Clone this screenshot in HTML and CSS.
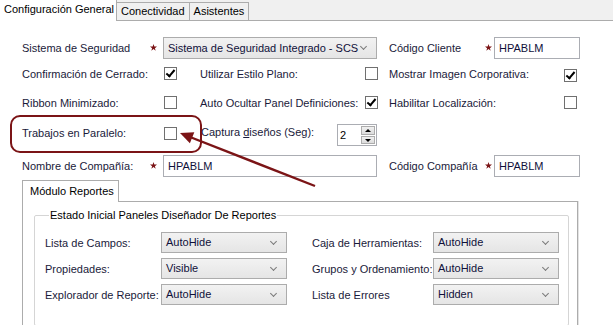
FILE: index.html
```html
<!DOCTYPE html>
<html lang="es">
<head>
    <meta charset="UTF-8">
    <title>Configuración General</title>
    <link rel="stylesheet" href="styles.css">
</head>
<body>
    <div id="window">
        <div class="tabs">
            <div class="tab active">Configuración General</div>
            <div class="tab">Conectividad</div>
            <div class="tab">Asistentes</div>
        </div>

        <div class="page">
            <div class="form-grid">
                <!-- fila 1 -->
                <span class="label col-a">Sistema de Seguridad</span>
                <span class="req col-b"><svg viewBox="0 0 10 10"><polygon points="5,0 6.2,3.6 10,3.6 7,5.9 8.1,9.5 5,7.3 1.9,9.5 3,5.9 0,3.6 3.8,3.6"/></svg></span>
                <div class="combo wide col-c">Sistema de Seguridad Integrado - SCS</div>
                <span class="label col-f">Código Cliente</span>
                <span class="req col-g"><svg viewBox="0 0 10 10"><polygon points="5,0 6.2,3.6 10,3.6 7,5.9 8.1,9.5 5,7.3 1.9,9.5 3,5.9 0,3.6 3.8,3.6"/></svg></span>
                <div class="textbox short col-h">HPABLM</div>

                <!-- fila 2 -->
                <span class="label col-a">Confirmación de Cerrado:</span>
                <span class="check on col-c"></span>
                <span class="label col-d">Utilizar Estilo Plano:</span>
                <span class="check col-e"></span>
                <span class="label col-f">Mostrar Imagen Corporativa:</span>
                <span class="check on low col-i"></span>

                <!-- fila 3 -->
                <span class="label col-a">Ribbon Minimizado:</span>
                <span class="check col-c"></span>
                <span class="label col-d">Auto Ocultar Panel Definiciones:</span>
                <span class="check on col-e"></span>
                <span class="label col-f">Habilitar Localización:</span>
                <span class="check col-i"></span>

                <!-- fila 4 -->
                <span class="label col-a">Trabajos en Paralelo:</span>
                <span class="check col-c"></span>
                <div class="spin-row">
                    <span class="label">Captura <u>d</u>iseños (Seg):</span>
                    <div class="spinner">
                        <span class="spin-value">2</span>
                        <span class="spin-btns"><i class="up"></i><i class="down"></i></span>
                    </div>
                </div>

                <!-- fila 5 -->
                <span class="label col-a bottom">Nombre de Compañía:</span>
                <span class="req col-b bottom"><svg viewBox="0 0 10 10"><polygon points="5,0 6.2,3.6 10,3.6 7,5.9 8.1,9.5 5,7.3 1.9,9.5 3,5.9 0,3.6 3.8,3.6"/></svg></span>
                <div class="textbox wide col-c bottom">HPABLM</div>
                <span class="label col-f bottom">Código Compañía</span>
                <span class="req col-g bottom"><svg viewBox="0 0 10 10"><polygon points="5,0 6.2,3.6 10,3.6 7,5.9 8.1,9.5 5,7.3 1.9,9.5 3,5.9 0,3.6 3.8,3.6"/></svg></span>
                <div class="textbox short col-h bottom">HPABLM</div>
            </div>

            <div class="subtabs">
                <div class="subtab">Módulo Reportes</div>
            </div>
            <div class="subpage">
                <fieldset class="group">
                    <legend>Estado Inicial Paneles Diseñador De Reportes</legend>
                    <div class="panel-grid">
                        <span class="label">Lista de Campos:</span>
                        <div class="combo small">AutoHide</div>
                        <span class="label right">Caja de Herramientas:</span>
                        <div class="combo small">AutoHide</div>

                        <span class="label">Propiedades:</span>
                        <div class="combo small">Visible</div>
                        <span class="label right">Grupos y Ordenamiento:</span>
                        <div class="combo small">AutoHide</div>

                        <span class="label">Explorador de Reporte:</span>
                        <div class="combo small">AutoHide</div>
                        <span class="label right">Lista de Errores</span>
                        <div class="combo small">Hidden</div>
                    </div>
                </fieldset>
            </div>
        </div>

        <!-- anotación -->
        <div class="callout"></div>
        <svg class="arrow" width="613" height="325" viewBox="0 0 613 325">
            <line x1="315" y1="186" x2="190" y2="137" stroke="#7b1416" stroke-width="2.4"/>
            <polygon points="180,133 194.3,132.2 189.9,143.3" fill="#7b1416"/>
        </svg>
    </div>
</body>
</html>
```

FILE: styles.css
```css
body {
    margin: 0;
    background: #ffffff;
    font-family: "Liberation Sans", Arial, sans-serif;
    font-size: 11px;
    color: #1a1a3a;
    overflow: hidden;
}

#window {
    position: relative;
    width: 613px;
    height: 325px;
    overflow: hidden;
}

/* pestañas superiores */
.tabs {
    display: flex;
    align-items: flex-end;
    height: 20px;
    background: #f0f0f0;
    border-bottom: 1px solid #acacac;
}

.tab {
    box-sizing: border-box;
    height: 18px;
    padding: 2px 4px 0 4px;
    background: #f0f0f0;
    border: 1px solid #acacac;
    border-bottom: none;
    border-left: none;
    color: #000;
}

.tab.active {
    width: 117px;
    height: 21px;
    margin-bottom: -1px;
    padding: 3px 0 0 4px;
    background: #ffffff;
    border-top: none;
}

.page {
    padding: 16px 0 0 22px;
}

/* formulario principal */
.form-grid {
    display: grid;
    grid-template-columns: 128px 13px 37px 164px 25px 96px 9px 69px 17px;
    grid-template-rows: 22px 29px 29px 32px 28px;
    align-items: center;
}

.col-a { grid-column: 1 / 3; }
.col-b { grid-column: 2; }
.col-c { grid-column: 3 / 6; }
.col-d { grid-column: 4; }
.col-e { grid-column: 5; }
.col-f { grid-column: 6 / 9; }
.col-g { grid-column: 7; }
.col-h { grid-column: 8 / 10; }
.col-i { grid-column: 9; }

.check.col-c { grid-column: 3; }
.req.col-b + .combo, .req.col-b + .textbox { grid-column: 3 / 6; }
.label.col-a + .req { grid-column: 2; }
.form-grid .label.col-a:has(+ .req) { grid-column: 1; }
.form-grid .label.col-f:has(+ .req) { grid-column: 6; }

.bottom {
    align-self: end;
    line-height: 22px;
}

.label {
    white-space: nowrap;
}

.req {
    display: flex;
    align-items: center;
    height: 22px;
}

.req svg {
    width: 7px;
    height: 7px;
    margin-top: -1px;
    fill: #7b1416;
}

.textbox, .combo {
    box-sizing: border-box;
    height: 22px;
    line-height: 20px;
    padding-left: 4px;
    white-space: nowrap;
    color: #10103a;
}

.textbox {
    background: #ffffff;
    border: 1px solid #abadb3;
}

.combo {
    position: relative;
    background: linear-gradient(#f2f2f2, #e5e5e5);
    border: 1px solid #acacac;
}

.combo::after {
    content: "";
    position: absolute;
    right: 10px;
    top: 6px;
    width: 4px;
    height: 4px;
    border-right: 1.5px solid #7a7a7a;
    border-bottom: 1.5px solid #7a7a7a;
    transform: rotate(45deg);
}

.wide { width: 214px; }
.short { width: 86px; }
.small { width: 126px; height: 21px; line-height: 19px; }

.check {
    box-sizing: border-box;
    position: relative;
    width: 13px;
    height: 13px;
    margin-left: 1px;
    background: #ffffff;
    border: 1px solid #707070;
}

.check.low {
    margin-top: 4px;
}

.check.on::after {
    content: "";
    position: absolute;
    left: 3px;
    top: 0;
    width: 3px;
    height: 7px;
    border-right: 2px solid #000;
    border-bottom: 2px solid #000;
    transform: rotate(40deg);
}

/* captura diseños */
.spin-row {
    grid-column: 4 / 6;
    display: flex;
    align-items: center;
    padding-top: 1px;
}

.spin-row .label {
    margin-left: 1px;
    margin-top: -3px;
}

.spinner {
    box-sizing: border-box;
    display: flex;
    width: 40px;
    height: 22px;
    margin: 3px 12px 0 auto;
    border: 1px solid #abadb3;
    background: #fff;
}

.spin-value {
    flex: 1;
    padding-left: 2px;
    line-height: 20px;
    color: #000;
}

.spin-btns {
    display: flex;
    flex-direction: column;
    justify-content: center;
    gap: 1px;
    width: 14px;
    padding: 1px 1px 1px 0;
}

.spin-btns i {
    position: relative;
    flex: 1;
    background: linear-gradient(#f0f0f0, #dcdcdc);
    border: 1px solid #acacac;
}

.spin-btns i::after {
    content: "";
    position: absolute;
    left: 3px;
    top: 2px;
    border-left: 3px solid transparent;
    border-right: 3px solid transparent;
}

.spin-btns .up::after { border-bottom: 3px solid #000; }
.spin-btns .down::after { border-top: 3px solid #000; }

/* sub pestaña */
.subtabs {
    display: flex;
    margin-top: 3px;
}

.subtab {
    box-sizing: border-box;
    width: 97px;
    height: 22px;
    padding: 4px 0 0 7px;
    margin-bottom: -1px;
    background: #ffffff;
    border: 1px solid #acacac;
    border-bottom: none;
    position: relative;
    z-index: 1;
    color: #000;
}

.subpage {
    box-sizing: border-box;
    width: 556px;
    height: 140px;
    border: 1px solid #acacac;
    box-shadow: 1px 0 0 #e3e3e3;
    padding: 7px 8px 0 11px;
}

.group {
    margin: 0;
    padding: 11px 9px 20px 10px;
    border: 1px solid #d5d5d5;
    border-radius: 2px;
}

.group legend {
    padding: 0 1px;
    margin-left: 4px;
    color: #000;
}

.panel-grid {
    display: grid;
    grid-template-columns: 116px 126px 25px 121px 126px;
    grid-auto-rows: 21px;
    row-gap: 5px;
    align-items: center;
}

.panel-grid .label:first-child,
.panel-grid .combo + .label:not(.right) {
    grid-column: 1;
}

.panel-grid .label.right {
    grid-column: 4;
}

/* anotación */
.callout {
    position: absolute;
    left: 10px;
    top: 115px;
    width: 192px;
    height: 38px;
    box-sizing: border-box;
    border: 2px solid #7b1416;
    border-radius: 10px;
}

.arrow {
    position: absolute;
    left: 0;
    top: 0;
    pointer-events: none;
}
```
